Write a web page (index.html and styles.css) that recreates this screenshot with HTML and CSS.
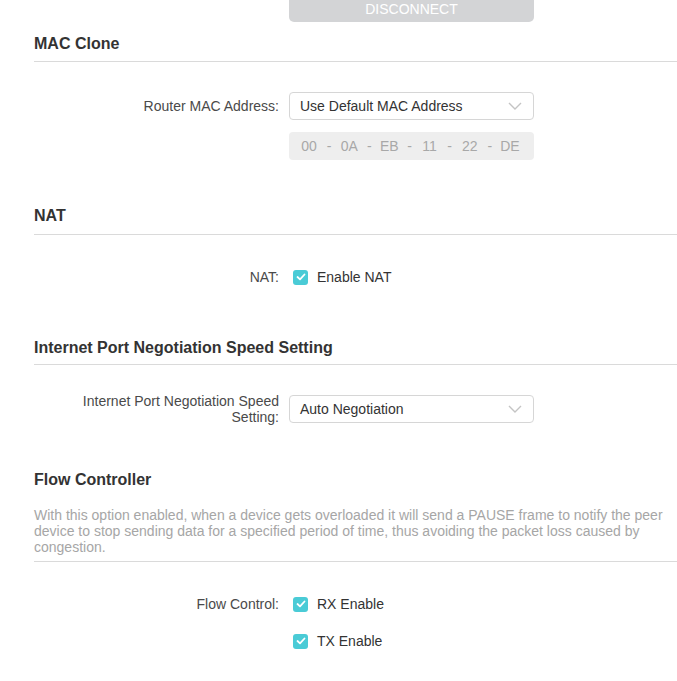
FILE: index.html
```html
<!DOCTYPE html>
<html>
<head>
<meta charset="utf-8">
<link rel="stylesheet" href="styles.css">
</head>
<body>
<div class="page">
  <div class="row top-row">
    <div class="label"></div>
    <div class="btn-disconnect">DISCONNECT</div>
  </div>

  <div class="section s-mac">
    <div class="sec-head"><h2 class="title">MAC Clone</h2></div>
    <div class="row first">
      <div class="label">Router MAC Address:</div>
      <div class="select"><span>Use Default MAC Address</span>
        <svg class="chev" width="14" height="8" viewBox="0 0 14 8"><path d="M1 1 L7 7 L13 1" fill="none" stroke="#c4c4c4" stroke-width="1.4"/></svg>
      </div>
    </div>
    <div class="row mac-row">
      <div class="label"></div>
      <div class="mac">
        <span class="f">00</span><span class="s">-</span>
        <span class="f">0A</span><span class="s">-</span>
        <span class="f">EB</span><span class="s">-</span>
        <span class="f">11</span><span class="s">-</span>
        <span class="f">22</span><span class="s">-</span>
        <span class="f">DE</span>
      </div>
    </div>
  </div>

  <div class="section s-nat">
    <div class="sec-head"><h2 class="title">NAT</h2></div>
    <div class="row first">
      <div class="label">NAT:</div>
      <label class="check"><span class="box"><svg width="10" height="8" viewBox="0 0 10 8"><path d="M1.5 4 L4 6.3 L8.5 1.5" fill="none" stroke="#fff" stroke-width="1.8" stroke-linecap="round" stroke-linejoin="round"/></svg></span>Enable NAT</label>
    </div>
  </div>

  <div class="section s-speed">
    <div class="sec-head"><h2 class="title">Internet Port Negotiation Speed Setting</h2></div>
    <div class="row first">
      <div class="label">Internet Port Negotiation Speed Setting:</div>
      <div class="select"><span>Auto Negotiation</span>
        <svg class="chev" width="14" height="8" viewBox="0 0 14 8"><path d="M1 1 L7 7 L13 1" fill="none" stroke="#c4c4c4" stroke-width="1.4"/></svg>
      </div>
    </div>
  </div>

  <div class="section s-flow">
    <div class="sec-head">
      <h2 class="title">Flow Controller</h2>
      <p class="desc">With this option enabled, when a device gets overloaded it will send a PAUSE frame to notify the peer device to stop sending data for a specified period of time, thus avoiding the packet loss caused by congestion.</p>
    </div>
    <div class="row first">
      <div class="label">Flow Control:</div>
      <label class="check"><span class="box"><svg width="10" height="8" viewBox="0 0 10 8"><path d="M1.5 4 L4 6.3 L8.5 1.5" fill="none" stroke="#fff" stroke-width="1.8" stroke-linecap="round" stroke-linejoin="round"/></svg></span>RX Enable</label>
    </div>
    <div class="row tight">
      <div class="label"></div>
      <label class="check"><span class="box"><svg width="10" height="8" viewBox="0 0 10 8"><path d="M1.5 4 L4 6.3 L8.5 1.5" fill="none" stroke="#fff" stroke-width="1.8" stroke-linecap="round" stroke-linejoin="round"/></svg></span>TX Enable</label>
    </div>
  </div>
</div>
</body>
</html>
```

FILE: styles.css
```css
html, body {
  margin: 0;
  padding: 0;
  background: #fff;
  overflow: hidden;
}
body {
  font-family: "Liberation Sans", Arial, sans-serif;
  font-size: 14px;
  color: #333;
}
.page {
  padding-left: 34px;
}
.row {
  display: flex;
  align-items: center;
  min-height: 28px;
}
.label {
  width: 200px;
  margin-left: 45px;
  margin-right: 10px;
  flex: none;
  text-align: right;
  line-height: 16px;
  color: #4a4a4a;
}
.top-row {
  margin-top: -4px;
  min-height: 26px;
}
.btn-disconnect {
  width: 245px;
  height: 26px;
  line-height: 26px;
  background: #d3d4d6;
  color: #fff;
  text-align: center;
  font-size: 14px;
  border-radius: 0 0 5px 5px;
}
.s-mac {
  margin-top: 12px;
}
.s-nat {
  margin-top: 46px;
}
.s-speed {
  margin-top: 47px;
}
.s-flow {
  margin-top: 45px;
}
.sec-head {
  border-bottom: 1px solid #dadada;
  padding-bottom: 7px;
}
.s-nat .sec-head {
  padding-bottom: 8px;
}
.s-speed .sec-head {
  padding-bottom: 6px;
}
.s-flow .sec-head {
  padding-bottom: 6px;
}
.title {
  margin: 0;
  font-size: 16px;
  line-height: 20px;
  font-weight: bold;
  color: #333;
}
.desc {
  margin: 17px 0 0;
  font-size: 14px;
  line-height: 16px;
  color: #a6a6a6;
}
.row.first {
  margin-top: 29px;
}
.s-mac .row.first {
  margin-top: 30px;
}
.s-nat .row.first {
  margin-top: 28px;
}
.s-speed .row.first {
  margin-top: 28px;
}
.s-flow .row.first {
  margin-top: 28px;
}
.row.mac-row {
  margin-top: 12px;
}
.row.tight {
  margin-top: 9px;
}
.select {
  width: 245px;
  height: 28px;
  box-sizing: border-box;
  border: 1px solid #d6d6d6;
  border-radius: 4px;
  display: flex;
  align-items: center;
  justify-content: space-between;
  padding: 0 11px 0 10px;
  color: #333;
}
.chev {
  display: block;
}
.mac {
  width: 245px;
  height: 28px;
  box-sizing: border-box;
  background: #eeeeee;
  border-radius: 4px;
  display: flex;
  align-items: center;
  padding: 0 0 0 8px;
  color: #a8a8a8;
}
.mac .f {
  width: 24px;
  text-align: center;
}
.mac .s {
  width: 16.2px;
  text-align: center;
}
.check {
  display: flex;
  align-items: center;
  color: #333;
  padding-left: 4px;
}
.box {
  width: 15px;
  height: 15px;
  border-radius: 3px;
  background: #4acbd6;
  display: flex;
  align-items: center;
  justify-content: center;
  margin-right: 9px;
}
.box svg {
  display: block;
}
```
